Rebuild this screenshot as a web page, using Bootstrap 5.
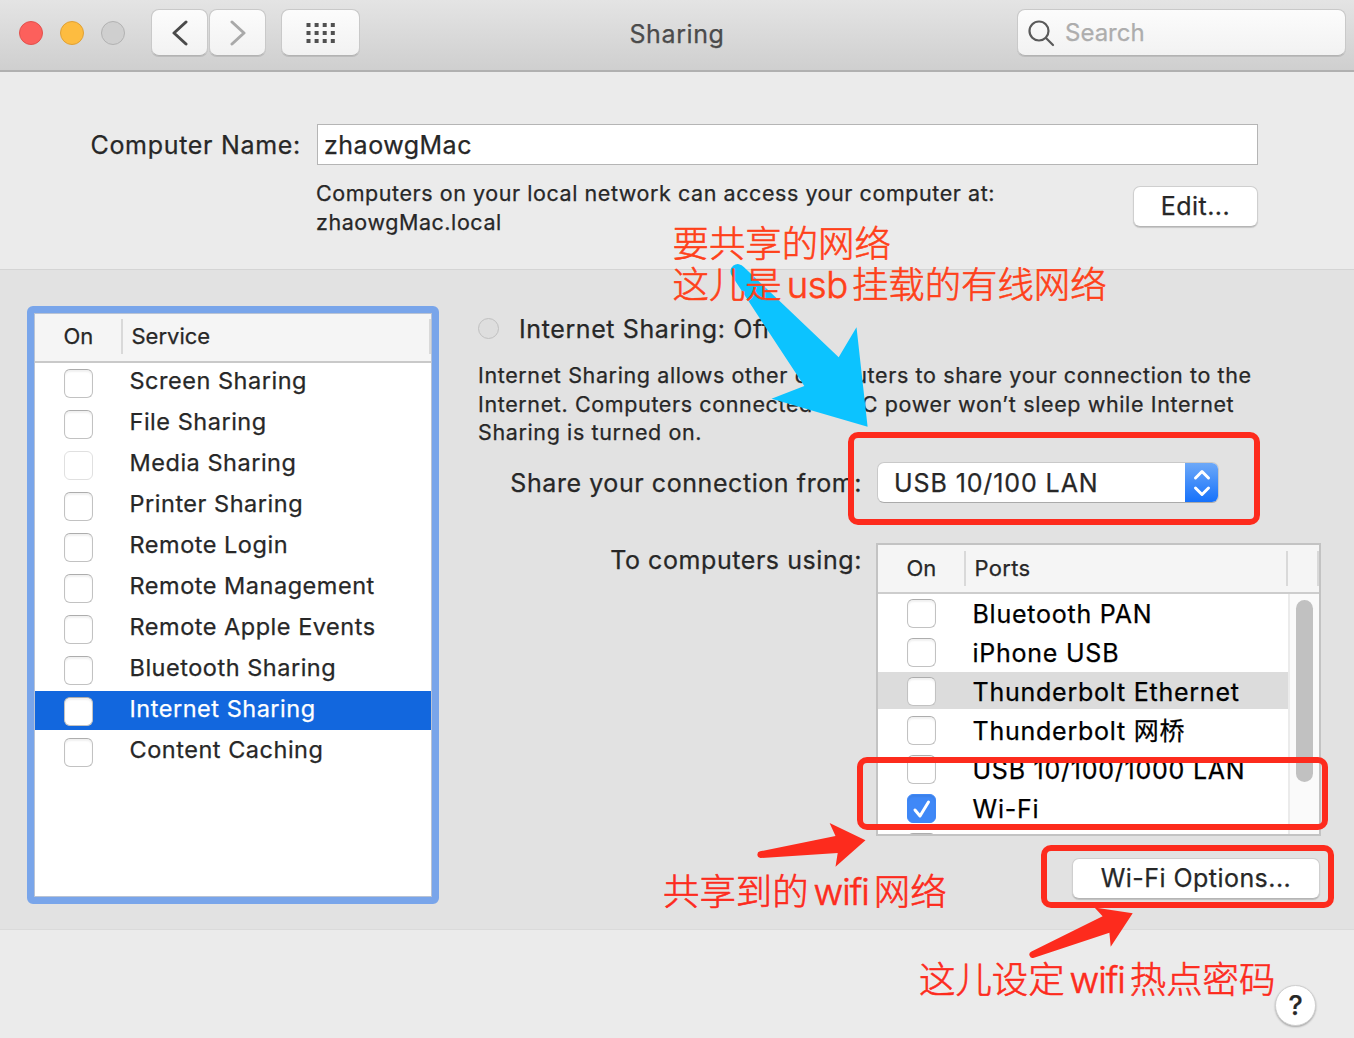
<!DOCTYPE html>
<html lang="en">
<head>
<meta charset="utf-8">
<meta name="viewport" content="width=device-width, initial-scale=1">
<title>Sharing</title>
<link href="https://cdn.jsdelivr.net/npm/bootstrap@5.3.0/dist/css/bootstrap.min.css" rel="stylesheet">
<style>
body{width:1354px;height:1038px;overflow:hidden;background:#ebebeb;color:#272727;font-family:Inter,"Noto Sans CJK SC",sans-serif;font-size:25px;line-height:30px;-webkit-text-stroke:.25px currentColor}
.toolbar{height:72px;padding:9px 8px 0;background:linear-gradient(#e4e4e4,#cfcfcf);border-bottom:2px solid #b0b0b0}
.side{flex:1 1 0}
.lights{gap:17px;padding:12px 0 0 11px}
.light{width:24px;height:24px;border-radius:50%;border:1px solid}
.light-red{background:#fc605c;border-color:#e2514d}
.light-yellow{background:#fdbc40;border-color:#e0a136}
.light-off{background:#cfcfcf;border-color:#b2b2b2}
.tool-btn{height:47px;width:57px;border:1px solid #c9c9c9;border-bottom-color:#b3b3b3;border-radius:8px;background:linear-gradient(#fcfcfc,#f2f2f2);box-shadow:0 1px 0 #bdbdbd;padding:0;display:flex;align-items:center;justify-content:center}
.btn-prev{margin-left:26px}
.btn-next{margin-left:1px}
.btn-grid{width:79px;margin-left:15px}
.win-title{color:#4b4b4b;padding-top:10px;letter-spacing:.6px}
.search-box{width:329px;justify-content:flex-start;padding-left:10px;color:#adadad;font-size:24px}
.name-pane{height:198px;padding-top:52px;border-bottom:1px solid #d4d4d4}
.name-label{width:301px;margin-right:16px;letter-spacing:.7px}
.name-input{width:941px;height:41px;border:1px solid #b5b5b5;border-radius:0;background:#fff;color:#272727;padding:0 6px;font-size:25px;line-height:39px;letter-spacing:.5px;-webkit-text-stroke:inherit}
.name-note{margin-left:316px;width:817px;padding-top:14px;font-size:21.5px;line-height:28.6px;letter-spacing:.56px}
.push{height:41px;border:1px solid #cfcfcf;border-bottom-color:#b5b5b5;border-radius:7px;background:#fff;box-shadow:0 1px 1px rgba(0,0,0,.16);color:#272727;padding:0;font-size:25px;line-height:37px;letter-spacing:.45px;-webkit-text-stroke:inherit}
.share-pane{height:660px;background:#e2e2e2;padding:36px 33px 0 27px;border-bottom:1px solid #dadada}
.svc-list{width:412px;height:598px;border:7px solid #79a5ea;border-radius:6px;background:#fff;flex:none}
.svc-inner{height:584px;border:1px solid #b9c3d4}
.list-head{height:49px;background:#f5f5f5;border-bottom:2px solid #c9c9c9;font-size:22px;padding:5px 0 7px}
.head-cell{line-height:34px}
.head-rule{width:2px;background:#d9d9d9}
.svc-row{height:39px;margin-bottom:2px;padding-left:29px}
.svc-row .tick{margin-top:6px}
.svc-row.active-row{background:#1267de;color:#fff}
.svc-name{font-size:23.5px;line-height:30px;margin-left:37.5px;padding-top:3px;letter-spacing:.52px}
.tick{width:29px;height:29px;border:1px solid #c2c2c2;border-top-color:#adadad;border-radius:6px;background:#fff;box-shadow:inset 0 2px 2px rgba(0,0,0,.06);flex:none;margin-top:5px;margin-right:-1px}
.tick-dim{border-color:#e0e0e0;box-shadow:none}
.detail{margin-left:39px;width:843px}
.led{width:21px;height:21px;border-radius:50%;border:1px solid #c0c0c0;background:#dedede;margin-top:4px}
.state-line{padding-top:8px;letter-spacing:.6px}
.detail-text{font-size:21.5px;line-height:28.667px;white-space:nowrap;letter-spacing:.62px;margin-top:17px}
.field-label{width:384px;margin-right:15px;text-align:right;letter-spacing:.57px}
.pop{width:342px;height:41px;border:1px solid #c9c9c9;border-bottom-color:#aaa;border-radius:7px;background:#fff;overflow:hidden;letter-spacing:.9px;line-height:41px}
.pop-cap{width:34px;background:linear-gradient(#6faaf8,#1470fb);margin:-1px;padding-right:1px}
.ports{width:445px;height:293px;margin-left:-1px;border:2px solid #c3c3c3;background:#fff;overflow:hidden;color:#000}
.ports-head{height:49px;background:#f5f5f5;border-bottom:2px solid #cdcdcd;font-size:22px;color:#272727;padding:6px 0;line-height:34px}
.port-row{height:37px;margin-bottom:2px;padding-left:29px}
.port-row.hover-row{background:#dcdcdc}
.port-name{margin-left:37.5px;line-height:30px;padding-top:5px;white-space:nowrap;letter-spacing:.76px}
.track{width:31px;background:#fafafa;border-left:2px solid #ebebeb;padding:6px 0 0 6px}
.thumb{width:17px;height:182px;border-radius:9px;background:#c1c1c1}
.tick-on{background:#3f88f7;border-color:#3f88f7}
.help-btn{width:41px;height:41px;border-radius:50%;background:#fff;border:1px solid #cfcfcf;box-shadow:0 1px 2px rgba(0,0,0,.3);font-weight:500;font-size:27px;color:#272727;padding:0;line-height:38px}
.notes{inset:0;pointer-events:none}
.frame-red{border:6px solid #fd2b1d;border-radius:10px}
.hand{font-size:36.4px;line-height:41px;font-weight:300;white-space:nowrap;color:#fd2b1d;-webkit-text-stroke:.6px currentColor}
.hand-orange{color:#ff4019}
.latin{margin:0 4px 0 5px;letter-spacing:-.3px}
.latin-tight{margin:0 5px;letter-spacing:-1px}
</style>
</head>
<body class="position-relative">
<header class="toolbar d-flex">
  <div class="d-flex side">
    <div class="d-flex lights"><span class="light light-red"></span><span class="light light-yellow"></span><span class="light light-off"></span></div>
    <button class="tool-btn btn-prev"><svg width="18" height="26" fill="none" stroke="#4a4a4a" stroke-width="3" stroke-linecap="round" stroke-linejoin="round"><path d="M15 2 3 13 15 24"/></svg></button>
    <button class="tool-btn btn-next"><svg width="18" height="26" fill="none" stroke="#a9a9a9" stroke-width="3" stroke-linecap="round" stroke-linejoin="round"><path d="M3 2 15 13 3 24"/></svg></button>
    <button class="tool-btn btn-grid"><svg width="30" height="22" fill="none" stroke="#505050" stroke-width="4" stroke-dasharray="4 4.1"><path d="M.5 3H29M.5 11H29M.5 19H29"/></svg></button>
  </div>
  <div class="win-title">Sharing</div>
  <div class="d-flex side justify-content-end">
    <div class="tool-btn search-box"><svg width="27" height="28" fill="none" stroke="#5a5a5a" stroke-width="2.2" stroke-linecap="round" class="me-2"><circle cx="11" cy="12" r="9.500"/><path d="m18 19 7 7"/></svg><span style="margin-left:2px">Search</span></div>
  </div>
</header>
<section class="name-pane">
  <div class="d-flex align-items-center">
    <label class="name-label text-end">Computer Name:</label>
    <input class="name-input" value="zhaowgMac">
  </div>
  <div class="d-flex">
    <div class="name-note">Computers on your local network can access your computer at:<br>zhaowgMac.local</div>
    <button class="push" style="width:125px;margin-top:21px">Edit...</button>
  </div>
</section>
<section class="share-pane d-flex">
  <div class="svc-list"><div class="svc-inner">
    <div class="list-head d-flex"><div class="head-cell" style="width:86px;padding-left:28.5px">On</div><span class="head-rule"></span><div class="head-cell flex-fill" style="padding-left:8.5px">Service</div><span class="head-rule"></span></div>
    <div class="d-flex svc-row"><i class="tick"></i><span class="svc-name">Screen Sharing</span></div>
    <div class="d-flex svc-row"><i class="tick"></i><span class="svc-name">File Sharing</span></div>
    <div class="d-flex svc-row"><i class="tick tick-dim"></i><span class="svc-name">Media Sharing</span></div>
    <div class="d-flex svc-row"><i class="tick"></i><span class="svc-name">Printer Sharing</span></div>
    <div class="d-flex svc-row"><i class="tick"></i><span class="svc-name">Remote Login</span></div>
    <div class="d-flex svc-row"><i class="tick"></i><span class="svc-name">Remote Management</span></div>
    <div class="d-flex svc-row"><i class="tick"></i><span class="svc-name">Remote Apple Events</span></div>
    <div class="d-flex svc-row"><i class="tick"></i><span class="svc-name">Bluetooth Sharing</span></div>
    <div class="d-flex svc-row active-row"><i class="tick"></i><span class="svc-name">Internet Sharing</span></div>
    <div class="d-flex svc-row"><i class="tick"></i><span class="svc-name">Content Caching</span></div>
  </div></div>
  <div class="detail">
    <div class="d-flex state-line"><span class="led"></span><span style="margin-left:20px">Internet Sharing: Off</span></div>
    <div class="detail-text">Internet Sharing allows other computers to share your connection to the<br>Internet. Computers connected to AC power won’t sleep while Internet<br>Sharing is turned on.</div>
    <div class="d-flex align-items-center" style="margin-top:15px"><span class="field-label">Share your connection from:</span>
      <div class="pop d-flex"><span class="flex-fill" style="padding-left:16px">USB 10/100 LAN</span><span class="pop-cap d-flex align-items-center justify-content-center"><svg width="18" height="28" fill="none" stroke="#fff" stroke-width="3" stroke-linecap="round" stroke-linejoin="round"><path d="m2.500 9 6.500-6.500L15.500 9M2.500 19l6.500 6.500 6.500-6.500"/></svg></span></div>
    </div>
    <div class="d-flex" style="margin-top:40px"><span class="field-label" style="padding-top:2px">To computers using:</span>
      <div class="ports">
        <div class="ports-head d-flex"><div style="width:86px;padding-left:28.5px">On</div><span class="head-rule"></span><div class="flex-fill" style="padding-left:8.5px;letter-spacing:.3px">Ports</div><span class="head-rule" style="margin-right:29px"></span><span class="head-rule"></span></div>
        <div class="d-flex" style="height:240px">
          <div class="flex-fill overflow-hidden">
            <div class="d-flex port-row"><i class="tick"></i><span class="port-name">Bluetooth PAN</span></div>
            <div class="d-flex port-row"><i class="tick"></i><span class="port-name">iPhone USB</span></div>
            <div class="d-flex port-row hover-row"><i class="tick"></i><span class="port-name">Thunderbolt Ethernet</span></div>
            <div class="d-flex port-row"><i class="tick"></i><span class="port-name">Thunderbolt 网桥</span></div>
            <div class="d-flex port-row"><i class="tick"></i><span class="port-name">USB 10/100/1000 LAN</span></div>
            <div class="d-flex port-row"><i class="tick tick-on d-flex"><svg width="27" height="27" fill="none" stroke="#fff" stroke-width="3" stroke-linecap="round" stroke-linejoin="round"><path d="m7 15 5 6 8.500-14"/></svg></i><span class="port-name">Wi-Fi</span></div>
            <div class="d-flex port-row"><i class="tick"></i></div>
          </div>
          <div class="track"><div class="thumb"></div></div>
        </div>
      </div>
    </div>
    <div class="text-end" style="width:842px;margin-top:22px"><button class="push" style="width:248px">Wi-Fi Options...</button></div>
  </div>
</section>
<footer class="d-flex justify-content-end" style="padding:55px 38px 0 0"><button class="help-btn">?</button></footer>

<div class="notes position-absolute">
  <svg class="position-absolute top-0 start-0" width="1354" height="1038">
    <path fill="#0cc3ff" d="M743.8 267 838.7 357.3 856.5 327.3 867.6 426.7 771.5 398.7 804.3 386 732 276A7 7 0 0 1 743.8 267Z"/>
    <path fill="#fd2b1d" d="M760 851.3 835.5 836 829.6 823 865.5 840.3 835.5 866.7 837.7 853 760.5 858A3.4 3.4 0 0 1 760 851.3ZM1031.5 951.5 1102.6 916.3 1094.5 907.5 1132.7 913.3 1110.7 946.7 1109.4 932.7 1034 957.7A3.3 3.3 0 0 1 1031.5 951.5Z"/>
  </svg>
  <div class="position-absolute frame-red" style="left:848px;top:432px;width:412px;height:93px"></div>
  <div class="position-absolute frame-red" style="left:857px;top:757px;width:471px;height:73px"></div>
  <div class="position-absolute frame-red" style="left:1041px;top:845px;width:293px;height:63px"></div>
  <div class="position-absolute hand hand-orange" style="left:672.5px;top:224px">要共享的网络<br>这儿是<span class="latin">usb</span>挂载的有线网络</div>
  <div class="position-absolute hand" style="left:663px;top:872px">共享到的<span class="latin-tight">wifi</span>网络</div>
  <div class="position-absolute hand" style="left:919px;top:960px">这儿设定<span class="latin-tight">wifi</span>热点密码</div>
</div>
<script src="https://cdn.jsdelivr.net/npm/bootstrap@5.3.0/dist/js/bootstrap.bundle.min.js"></script>
</body>
</html>
